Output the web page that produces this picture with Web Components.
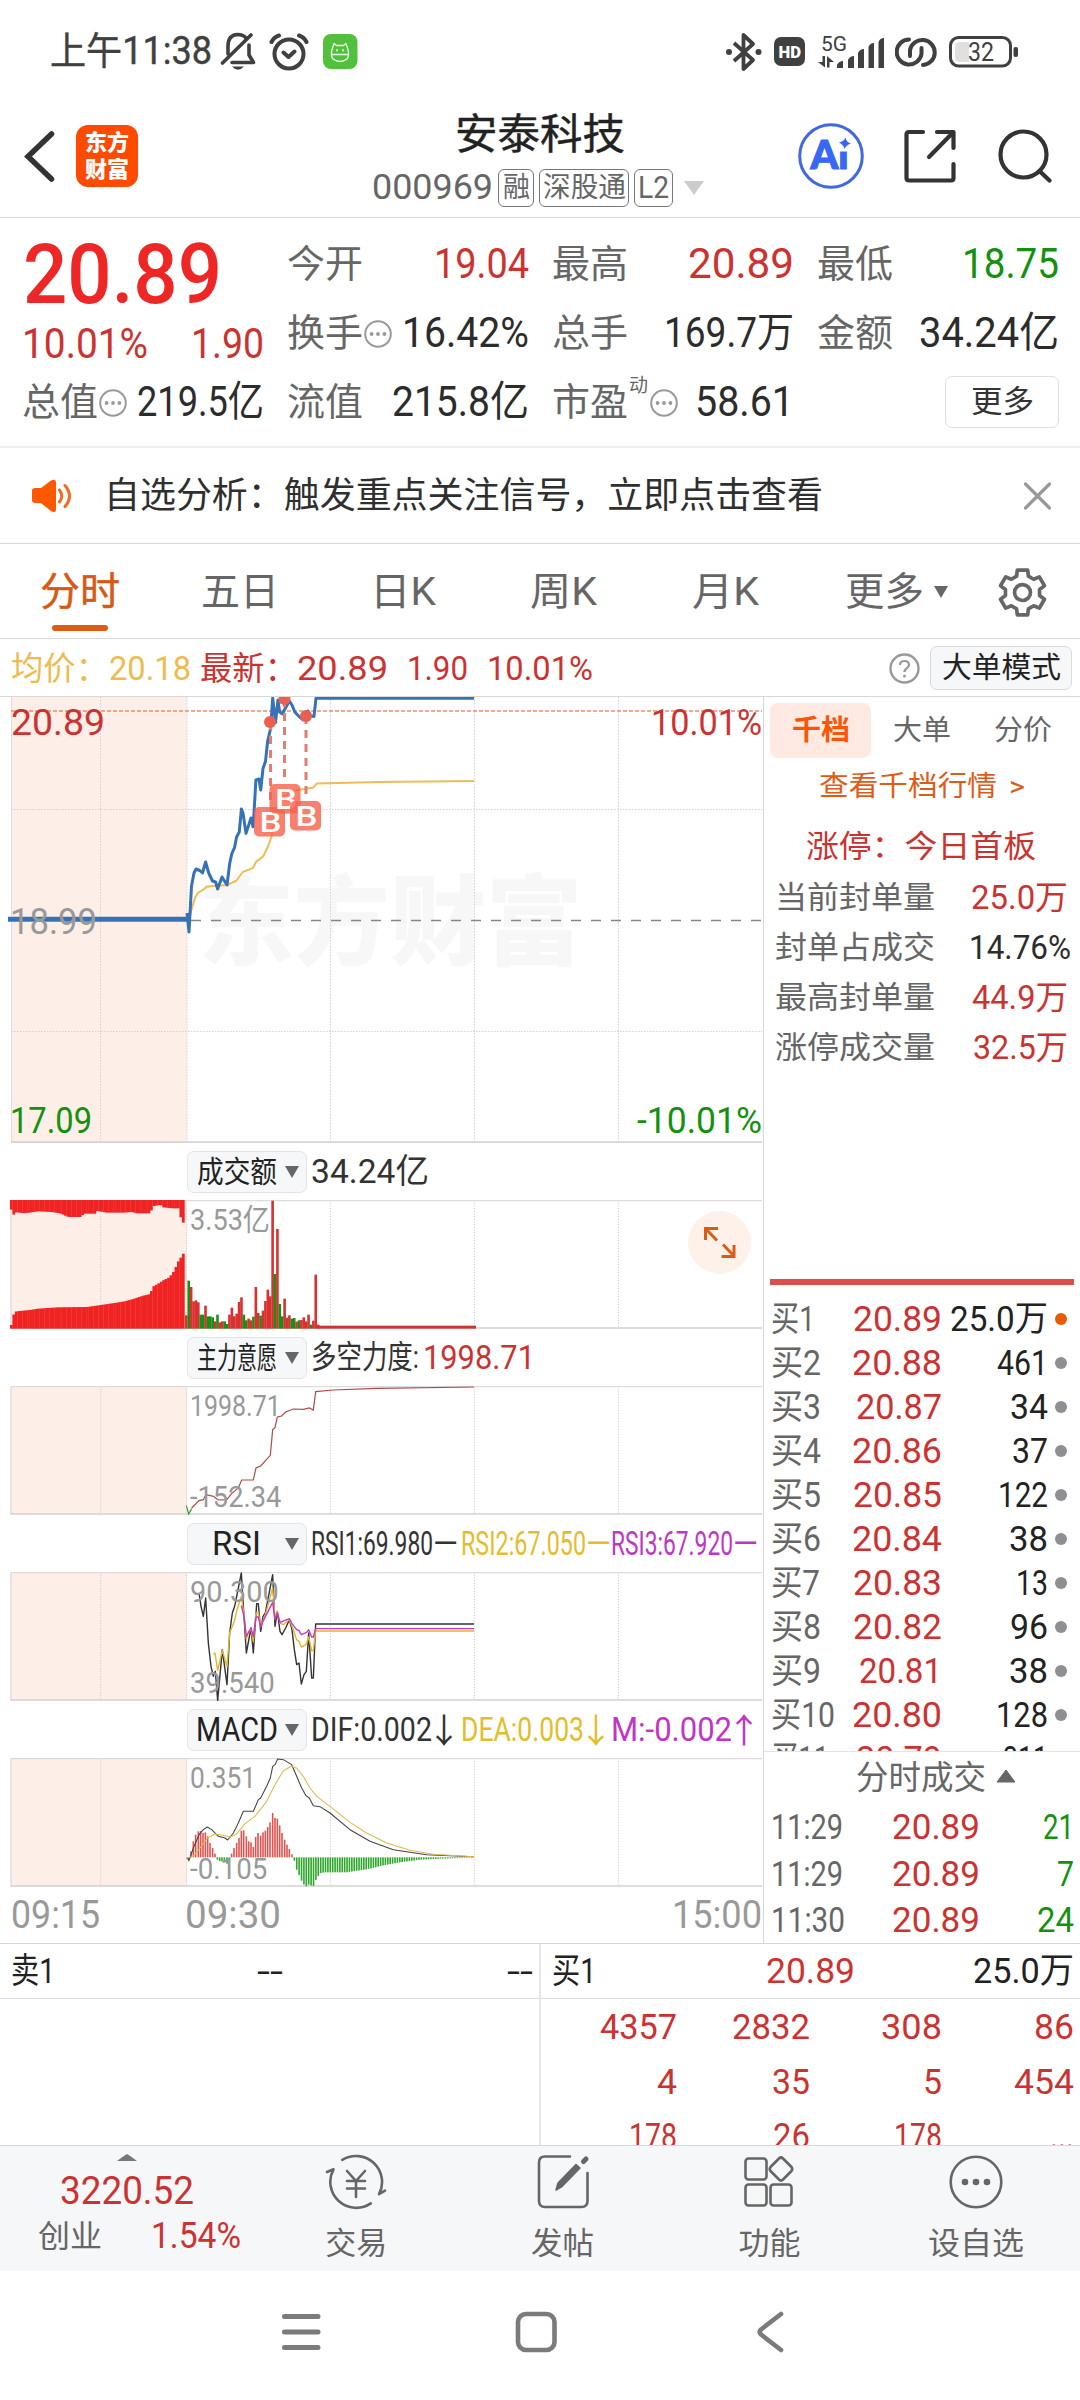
<!DOCTYPE html>
<html lang="zh-CN">
<head>
<meta charset="UTF-8">
<title>安泰科技 000969</title>
<style>
  html, body { margin: 0; padding: 0; background: #fff; }
  body {
    width: 1080px;
    height: 2400px;
    overflow: hidden;
    font-family: Roboto, "Noto Sans CJK SC", sans-serif;
    line-height: 1;
    color: #333;
    --red: #cb3331;
    --green: #15900f;
    --gray: #666;
    --line: #d8d8d8;
  }
  main { display: flex; height: 1246px; border-bottom: 1px solid #d5d6d8; }
</style>
</head>
<body>
  <status-bar></status-bar>
  <app-header></app-header>
  <quote-board></quote-board>
  <notice-bar>自选分析：触发重点关注信号，立即点击查看</notice-bar>
  <period-tabs></period-tabs>
  <price-strip></price-strip>
  <main>
    <chart-column></chart-column>
    <order-panel></order-panel>
  </main>
  <depth-split></depth-split>
  <bottom-bar></bottom-bar>
  <system-nav></system-nav>

<script>
// Shared base: renders the string returned by view() into an open shadow root
class BaseElement extends HTMLElement {
  constructor() {
    super();
    this._shadow = this.attachShadow({ mode: "open" });
  }

  connectedCallback() {
    this._shadow.innerHTML = this.view();
  }
}

// Text squeezed or stretched horizontally to the width in the "w" attribute
class FitText extends BaseElement {
  view() {
    return `
      <style>
        :host { display: inline-block; white-space: nowrap; flex: none; line-height: 1.2; }
        span { display: inline-block; transform-origin: 0 50%; }
      </style>
      <span><slot></slot></span>
    `;
  }

  connectedCallback() {
    super.connectedCallback();
    const w = Number(this.getAttribute("w"));
    const span = this._shadow.querySelector("span");
    const natural = span.getBoundingClientRect().width;
    if (!w || !natural) return;
    this.style.width = `${w}px`;
    span.style.transform = `scaleX(${w / natural})`;
  }
}
customElements.define("fit-text", FitText);

// Round "more info" hint next to a label
class InfoDot extends BaseElement {
  view() {
    return `
      <style>
        :host { display: inline-block; width: 28px; height: 30px; flex: none; }
        svg { display: block; }
      </style>
      <svg width="28" height="30" viewBox="0 0 28 30">
        <circle cx="14" cy="15" r="12.8" fill="none" stroke="#999" stroke-width="2"/>
        <g fill="#999"><circle cx="7.6" cy="15" r="1.9"/><circle cx="14" cy="15" r="1.9"/><circle cx="20.4" cy="15" r="1.9"/></g>
      </svg>
    `;
  }
}
customElements.define("info-dot", InfoDot);

class StatusBar extends BaseElement {
  view() {
    return `
      <style>
        :host { display: flex; height: 100px; box-sizing: border-box; padding: 0 61px 0 50px; align-items: center; justify-content: space-between; color: #404040; }
        div { display: flex; align-items: center; height: 40px; margin-top: 3px; }
        svg { display: block; flex: none; }
        .time { font-size: 38px; margin: 1px 8px 0 0; -webkit-text-stroke: .4px #404040; }
      </style>
      <div>
        <fit-text class="time" w="162">上午11:38</fit-text>
        <svg width="37" height="40" viewBox="0 0 37 40" fill="none" stroke="#404040" stroke-width="3.6" stroke-linecap="round" stroke-linejoin="round">
          <path d="M8 22V14Q8 3 17.5 2.5Q23 2.5 26 6M29 13V23L33.5 30.5H12"/>
          <path d="M2.5 31 31 3"/>
          <path d="M12 34.5Q18 41 24 34.5Z" fill="#404040" stroke="none"/>
        </svg>
        <svg style="margin-left:12px" width="40" height="40" viewBox="0 0 40 40" fill="none" stroke="#404040" stroke-width="4" stroke-linecap="round" stroke-linejoin="round">
          <circle cx="20" cy="22" r="14.5"/><path d="M2.5 10Q5 5 10 3.5M37.5 10Q35 5 30 3.5M14.5 20.5 19.5 25 25.5 19.5"/>
        </svg>
        <svg style="margin-left:14px" width="35" height="35" viewBox="0 0 35 35">
          <rect width="34.5" height="35" rx="8" fill="#52c03c"/>
          <g fill="none" stroke="#e9ffe5" stroke-width="1.3"><path d="M9.5 14 11 9.5 13.5 11.5H20.5L23 9.5 24.5 14Q27 21 24 25 17 30 10 25 7 21 9.5 14Z"/><path d="M8.5 20.5H25.5M14 15V17.5M20 15V17.5"/></g>
        </svg>
      </div>
      <div>
        <svg width="36" height="40" viewBox="0 0 36 40" fill="none" stroke="#404040" stroke-width="3.8" stroke-linejoin="round">
          <path d="M8 11 27 28 17.5 37V3L27 12 8 29"/><circle cx="3" cy="20" r="3" fill="#404040" stroke="none"/><circle cx="32.5" cy="20" r="3" fill="#404040" stroke="none"/>
        </svg>
        <svg style="margin-left:12px" width="31" height="30" viewBox="0 0 31 30">
          <rect width="31" height="29" rx="7" fill="#404040"/>
          <text x="4.5" y="20.5" font-size="17" font-weight="900" fill="#fff" textLength="22.5" lengthAdjust="spacingAndGlyphs">HD</text>
        </svg>
        <svg style="margin-left:12px" width="68" height="40" viewBox="0 0 68 40" fill="#404040">
          <text x="4" y="19" font-size="21" textLength="26" lengthAdjust="spacingAndGlyphs">5G</text>
          <path d="M5.5 24H8V35.5L1 30H5.5ZM10 24 17 30H12.5V35.5H10Z"/>
          <path d="M20 36V33Q22 29 26 29V36ZM31 36V28Q33 24 37 24V36ZM41 36V21Q43 17 47 17V36ZM51.5 36V15Q53 11 57 11V36ZM61.5 36V10Q63 6 67 6V36Z"/>
        </svg>
        <svg style="margin-left:10px" width="42" height="32" viewBox="0 0 42 32" fill="none" stroke="#404040" stroke-width="4" stroke-linecap="round">
          <path d="M14 3.5A12.5 12.5 0 1 0 26.5 18V12"/><path d="M28 29A12.5 12.5 0 1 0 15 14V20"/>
        </svg>
        <svg style="margin-left:12px" width="70" height="32" viewBox="0 0 70 32">
          <rect x="1.5" y="1.5" width="60" height="28.5" rx="8" fill="none" stroke="#404040" stroke-width="3"/>
          <path d="M11 6H20V26H11Q6 26 6 21V11Q6 6 11 6Z" fill="#e0e0e0"/>
          <rect x="64.5" y="11" width="4.5" height="10" rx="2" fill="#404040"/>
          <text x="19" y="24.5" font-size="25" fill="#404040" textLength="26" lengthAdjust="spacingAndGlyphs">32</text>
        </svg>
      </div>
    `;
  }
}
customElements.define("status-bar", StatusBar);

class AppHeader extends BaseElement {
  view() {
    return `
      <style>
        :host { display: grid; grid-template-columns: 360px 1fr 360px; height: 118px; box-sizing: border-box; border-bottom: 1px solid var(--line); }
        svg { display: block; flex: none; }
        .left, .right { display: flex; align-items: center; }
        .left { padding: 0 0 6px 24px; gap: 21px; }
        .logo { width: 62px; height: 62px; border-radius: 12px; background: #fe4a02; color: #fff; font-size: 22px; font-weight: 900; line-height: 27px; display: grid; place-content: center; text-align: center; }
        .mid { display: flex; flex-direction: column; align-items: center; padding-top: 10px; }
        .name { font-size: 42px; color: #222; height: 55px; line-height: 50px; -webkit-text-stroke: .4px #222; }
        .sub { display: flex; align-items: center; gap: 5px; color: var(--gray); font-size: 35px; margin: 2px 0 0 -4px; }
        .tag { border: 1.5px solid #777; border-radius: 6px; height: 36px; font-size: 28px; display: flex; align-items: center; justify-content: center; }
        .right { padding: 0 0 6px 78px; }
      </style>
      <div class="left">
        <svg width="31" height="52" viewBox="0 0 31 52" fill="none" stroke="#333" stroke-width="5.5" stroke-linecap="round"><path d="M27.5 4 4 26.5 27.5 49"/></svg>
        <div class="logo"><span>东方</span><span>财富</span></div>
      </div>
      <div class="mid">
        <fit-text class="name" w="170">安泰科技</fit-text>
        <div class="sub">
          <fit-text w="121">000969</fit-text>
          <div class="tag" style="width:34px"><fit-text w="27">融</fit-text></div>
          <div class="tag" style="width:88px"><fit-text w="83">深股通</fit-text></div>
          <div class="tag" style="width:37px;font-size:31px"><fit-text w="31">L2</fit-text></div>
          <svg style="margin-left:6px" width="20" height="14" viewBox="0 0 20 14"><path d="M0 0H20L10 14Z" fill="#ccc"/></svg>
        </div>
      </div>
      <div class="right">
        <svg width="66" height="68" viewBox="0 0 66 68">
          <circle cx="33" cy="34" r="31.3" fill="#fff" stroke="#4068e0" stroke-width="3"/>
          <text x="12.5" y="47" font-size="39" font-weight="900" font-family="Lato, Roboto" fill="#3866f5" stroke="#3866f5" stroke-width="1.2" textLength="38" lengthAdjust="spacingAndGlyphs">Ai</text>
          <rect x="40" y="14" width="14" height="15.5" fill="#fff"/>
          <path d="M47.5 15.5Q48.5 20.5 53 21.5 48.5 22.5 46.5 27 45.5 22.5 41 20.5 46 19.5 47.5 15.5Z" fill="#3866f5"/>
        </svg>
        <svg style="margin-left:40px" width="52" height="54" viewBox="0 0 52 54" fill="none" stroke="#333" stroke-width="4.2" stroke-linecap="round" stroke-linejoin="round">
          <path d="M19 3H5Q2.5 3 2.5 5.5V49Q2.5 51.5 5 51.5H47Q49.5 51.5 49.5 49V35"/><path d="M33 3H49.5V19M49 3.5 25 28"/>
        </svg>
        <svg style="margin-left:42px" width="54" height="55" viewBox="0 0 54 55" fill="none" stroke="#333" stroke-width="4.2" stroke-linecap="round">
          <circle cx="25.5" cy="26.5" r="23"/><path d="M41.5 43 51.5 52.500"/>
        </svg>
      </div>
    `;
  }
}
customElements.define("app-header", AppHeader);

// One label/value cell of the quote board
class QuoteItem extends BaseElement {
  view() {
    const sup = this.getAttribute("sup");
    return `
      <style>
        :host { display: flex; align-items: center; justify-content: space-between; height: 69px; font-size: 42px; color: var(--tone, #2c2c2c); }
        .label { display: flex; align-items: center; gap: 1px; color: var(--gray); font-size: 38px; }
        sup { font-size: 19px; line-height: 20px; align-self: flex-start; margin: -4px 1px 0 0; }
      </style>
      <div class="label"><fit-text w="76">${this.getAttribute("label")}</fit-text>${sup ? `<sup>${sup}</sup>` : ""}${this.hasAttribute("info") ? "<info-dot></info-dot>" : ""}</div>
      <fit-text w="${this.getAttribute("w")}">${this.textContent}</fit-text>
    `;
  }
}
customElements.define("quote-item", QuoteItem);

class QuoteBoard extends BaseElement {
  view() {
    return `
      <style>
        :host { display: grid; grid-template-columns: repeat(4, 242px); grid-template-rows: repeat(3, 69px); column-gap: 23px; height: 230px; box-sizing: border-box; padding: 12px 21px 10px 22px; border-bottom: 2px solid #eee; }
        .price { grid-row: span 2; color: var(--red); padding-top: 1px; }
        .big { font-size: 84px; font-weight: 500; color: #ee2625; line-height: 88px; display: block; margin-left: 1px; }
        .row { display: flex; justify-content: space-between; font-size: 42px; }
        .up { --tone: var(--red); }
        .down { --tone: var(--green); }
        .more { justify-self: end; align-self: center; width: 112px; height: 50px; border: 1px solid #dfe0e2; border-radius: 7px; font-size: 31px; display: flex; align-items: center; justify-content: center; margin-bottom: 2px; }
      </style>
      <div class="price">
        <fit-text class="big" w="199">20.89</fit-text>
        <div class="row"><fit-text w="126">10.01%</fit-text><fit-text w="73">1.90</fit-text></div>
      </div>
      <quote-item class="up" label="今开" w="95">19.04</quote-item>
      <quote-item class="up" label="最高" w="106">20.89</quote-item>
      <quote-item class="down" label="最低" w="97">18.75</quote-item>
      <quote-item label="换手" w="127" info>16.42%</quote-item>
      <quote-item label="总手" w="130">169.7万</quote-item>
      <quote-item label="金额" w="140">34.24亿</quote-item>
      <quote-item label="总值" w="127" info>219.5亿</quote-item>
      <quote-item label="流值" w="137">215.8亿</quote-item>
      <quote-item label="市盈" sup="动" w="99" info>58.61</quote-item>
      <div class="more"><fit-text w="63">更多</fit-text></div>
    `;
  }
}
customElements.define("quote-board", QuoteBoard);

class NoticeBar extends BaseElement {
  view() {
    return `
      <style>
        :host { display: flex; align-items: center; height: 96px; box-sizing: border-box; padding: 0 29px 0 31px; border-bottom: 1px solid var(--line); font-size: 36px; color: #2f2f2f; }
        .text { margin: 2px auto 0 32px; }
      </style>
      <svg width="41" height="34" viewBox="0 0 41 34">
        <path d="M4 9H10L20 1.5Q25-1 25 4V30Q25 35 20 32L10 24H4Q1 24 1 21V12Q1 9 4 9Z" fill="#fe5800"/>
        <path d="M28.5 11Q33 17 28.5 23M34 6.5Q43 17 34 27.5" fill="none" stroke="#f46a20" stroke-width="3" stroke-linecap="round"/>
      </svg>
      <fit-text class="text" w="719">${this.textContent}</fit-text>
      <svg width="27" height="28" viewBox="0 0 27 28" fill="none" stroke="#999" stroke-width="3.2" stroke-linecap="round"><path d="M1.5 2 25.5 26M25.5 2 1.5 26"/></svg>
    `;
  }
}
customElements.define("notice-bar", NoticeBar);

class PeriodTabs extends BaseElement {
  // six-tooth outline around (24, 24)
  gear() {
    const points = [];
    for (let i = 0; i < 6; i++) {
      [[-20, 17], [-13, 22.5], [13, 22.5], [20, 17]].forEach(([offset, r]) => {
        const a = ((i * 60 + offset - 90) * Math.PI) / 180;
        points.push(`${(24 + r * Math.cos(a)).toFixed(1)},${(24 + r * Math.sin(a)).toFixed(1)}`);
      });
    }
    return points.join(" ");
  }

  view() {
    return `
      <style>
        :host { display: grid; grid-template-columns: 160px 160px 166px 154px 171px 171px 80px; height: 95px; box-sizing: border-box; border-bottom: 1px solid var(--line); color: var(--gray); font-size: 39px; }
        div { display: flex; align-items: center; justify-content: center; gap: 10px; position: relative; padding-top: 2px; }
        .on { color: #d65a16; -webkit-text-stroke: .5px #d65a16; }
        .on::after { content: ""; position: absolute; left: 52px; bottom: 7px; width: 56px; height: 6px; border-radius: 3px; background: #dc5c12; }
      </style>
      <div class="on"><fit-text w="80">分时</fit-text></div>
      <div><fit-text w="78">五日</fit-text></div>
      <div><fit-text w="66">日K</fit-text></div>
      <div><fit-text w="67">周K</fit-text></div>
      <div><fit-text w="67">月K</fit-text></div>
      <div><fit-text w="79">更多</fit-text><svg width="14" height="12" viewBox="0 0 14 12"><path d="M0 0H14L7 12Z" fill="#666"/></svg></div>
      <div><svg width="49" height="49" viewBox="0 0 48 48" fill="none" stroke="#666" stroke-width="3.6" stroke-linejoin="round"><polygon points="${this.gear()}"/><circle cx="24" cy="24" r="7.8"/></svg></div>
    `;
  }
}
customElements.define("period-tabs", PeriodTabs);

class PriceStrip extends BaseElement {
  view() {
    return `
      <style>
        :host { display: flex; align-items: center; height: 58px; box-sizing: border-box; padding: 2px 8px 0 11px; border-bottom: 1px solid var(--line); font-size: 33px; color: var(--red); }
        .avg { color: #eebb50; }
        .help { margin: 0 0 1px auto; }
        .mode { width: 140px; height: 42px; margin: 0 0 1px 10px; border: 1px solid #d9dade; border-radius: 7px; background: #f6f7f9; color: #222; font-size: 29px; display: flex; align-items: center; justify-content: center; }
      </style>
      <fit-text class="avg" w="97">均价：</fit-text>
      <fit-text class="avg" w="82" style="margin-left:1px">20.18</fit-text>
      <fit-text w="97" style="margin-left:9px">最新：</fit-text>
      <fit-text w="91">20.89</fit-text>
      <fit-text w="61" style="margin-left:19px">1.90</fit-text>
      <fit-text w="106" style="margin-left:19px">10.01%</fit-text>
      <svg class="help" width="31" height="31" viewBox="0 0 31 31"><circle cx="15.5" cy="15.5" r="14" fill="none" stroke="#999" stroke-width="2.4"/><path d="M11 12Q11 8 15.5 8T20 12Q20 14 17.5 15.5 15.5 17 15.5 19" fill="none" stroke="#999" stroke-width="2.2"/><circle cx="15.5" cy="23" r="1.5" fill="#999"/></svg>
      <div class="mode"><fit-text w="119">大单模式</fit-text></div>
    `;
  }
}
customElements.define("price-strip", PriceStrip);

// Intraday price chart. Coordinates are page pixels, the viewBox shifts them up.
class PriceChart extends BaseElement {
  view() {
    const price = "187,913 189,932 191.5,886 194,873 196,869 199.7,870.5 202.5,873 205.6,862 208.7,873 212.5,881 215.6,882 217.6,889 222,877 227,885 229.7,863.5 231.7,854 234.5,847.6 236.6,837 239.3,832 241.4,809 243,813 246,833.4 251,818 253,826.7 254,813 255.9,780 259,779 260.7,790 263,768.5 265.5,761.4 267.6,741.7 270.7,728 272.7,698 275.5,722.7 278,700 279.6,712 282.4,714 284.4,710 289.3,701 292,705 294.8,712 299.6,717 303,720 308,711 310.6,716 314,716.4 316,698.2 474,698.2";
    const avg = "189,920 191.5,909.7 195,898 198,892.7 203,890 206.6,886.8 213.5,886 227,885 236,881 242.8,872 253,868 256,862 263.4,856 268,846.5 271.3,837 275.5,813 283,797 292.7,791 304.8,789 313.4,787.5 316.8,783.6 378.8,782 474,781";
    const marker = (x, y) => `<rect x="${x}" y="${y}" width="31" height="29.5" rx="5" fill="#f8634f" fill-opacity=".82"/><text x="${x + 5.5}" y="${y + 24.5}" font-size="28" font-weight="500" fill="#fff" textLength="22" lengthAdjust="spacingAndGlyphs">B</text>`;
    return `
      <style>
        :host { display: block; width: 763px; height: 446px; }
        svg { display: block; font-size: 37.5px; }
      </style>
      <svg width="763" height="446" viewBox="0 697 763 446">
        <rect x="11" y="697" width="176" height="446" fill="#fdeee7"/>
        <text x="198" y="957" font-size="98" font-weight="900" fill="#f7f7f7" textLength="384" lengthAdjust="spacingAndGlyphs">东方财富</text>
        <g stroke="#d2d2d2" stroke-dasharray="1.5 1.5">
          <path d="M100.5 697V1142M187 697V1142M330.5 697V1142M474.5 697V1142M618.5 697V1142M11 809.5H762M11 1031.5H762"/>
        </g>
        <path d="M11.5 697V1142" stroke="#ddd"/>
        <path d="M11 1142.2H762" stroke="#d5d5d5" stroke-width="2"/>
        <path d="M11 711H762" stroke="#e2936a" stroke-width="1.4" stroke-dasharray="4 2"/>
        <path d="M191 920.5H762" stroke="#868686" stroke-width="1.6" stroke-dasharray="10 10"/>
        <polyline points="${avg}" fill="none" stroke="#eebd55" stroke-width="2"/>
        <path d="M8 919.3H188" stroke="#3672b8" stroke-width="5"/>
        <polyline points="${price}" fill="none" stroke="#3672b8" stroke-width="3" stroke-linejoin="round"/>
        <path d="M270.5 722V802M284.5 699V779M306 716V796" stroke="#e37d70" stroke-width="3" stroke-dasharray="8 6"/>
        <g fill="#ec5f50"><circle cx="270" cy="722" r="6"/><circle cx="284.5" cy="699" r="6"/><circle cx="306" cy="716" r="6"/></g>
        ${marker(254, 807)}${marker(269.5, 784)}${marker(290, 801)}
        <g fill="#cb3331">
          <text x="11" y="735" textLength="94" lengthAdjust="spacingAndGlyphs">20.89</text>
          <text x="651" y="735" textLength="111" lengthAdjust="spacingAndGlyphs">10.01%</text>
        </g>
        <text x="10" y="934" fill="#999" textLength="87" lengthAdjust="spacingAndGlyphs">18.99</text>
        <g fill="#15900f">
          <text x="10" y="1133" textLength="82" lengthAdjust="spacingAndGlyphs">17.09</text>
          <text x="637" y="1133" textLength="125" lengthAdjust="spacingAndGlyphs">-10.01%</text>
        </g>
      </svg>
    `;
  }
}
customElements.define("price-chart", PriceChart);

// Indicator strip: selector, legend (slot) and a plot drawn at 3 units per pixel
class IndicatorChart extends BaseElement {
  view() {
    const kind = this.getAttribute("kind");
    const high = this.getAttribute("high").split("|");
    const low = (this.getAttribute("low") || "").split("|");
    return `
      <style>
        :host { display: block; width: 763px; height: 186px; }
        header { display: flex; align-items: center; height: 57px; padding-left: 187px; font-size: 34px; }
        .pick { display: flex; align-items: center; justify-content: space-between; width: 118px; height: 40px; flex: none; border: 1px solid #e3e4e7; border-radius: 7px; background: #f6f7f9; color: #222; font-size: ${this.getAttribute("size") || 34}px; margin-right: 4px; }
        .pick span { flex: 1; text-align: center; }
        .pick svg { margin-right: 7px; flex: none; }
        svg { display: block; }
        .plot text { font-size: 88px; fill: #999; }
      </style>
      <header>
        <div class="pick">
          <span><fit-text w="${this.getAttribute("pick-w")}">${this.getAttribute("pick")}</fit-text></span>
          <svg width="14" height="12" viewBox="0 0 14 12"><path d="M0 0H14L7 12Z" fill="#666"/></svg>
        </div>
        <slot></slot>
      </header>
      <svg class="plot" width="763" height="129" viewBox="0 0 2289 387">
        <rect x="33" y="0" width="528" height="385" fill="#fdeee7"/>
        <path d="M302 0V385M560 0V385M991 0V385M1423 0V385M1855 0V385" stroke="#d2d2d2" stroke-width="3" stroke-dasharray="4 4"/>
        <path d="M33 0V385M31 2H2286" stroke="#dcdcdc" stroke-width="4" fill="none"/>
        <path d="M31 384H2286" stroke="#d2d2d2" stroke-width="5"/>
        ${kind === "volume" ? "" : this[kind]()}
        <text x="570" y="90" textLength="${high[1]}" lengthAdjust="spacingAndGlyphs">${high[0]}</text>
        ${low[1] ? `<text x="570" y="363" textLength="${low[1]}" lengthAdjust="spacingAndGlyphs">${low[0]}</text>` : ""}
        ${kind === "volume" ? this.volume() : ""}
      </svg>
    `;
  }

  bars(list, base, width) {
    return list.map(([x, y, c]) => `<rect x="${x - width / 2}" y="${Math.min(y, base)}" width="${width}" height="${Math.abs(base - y)}" fill="${c}"/>`).join("");
  }

  // expands [x, y] anchor points into steps of one bar each
  steps(anchors, pitch) {
    const out = [];
    for (let x = anchors[0][0]; x <= anchors[anchors.length - 1][0]; x += pitch) {
      const i = Math.max(1, anchors.findIndex((a) => a[0] >= x));
      const [x0, y0] = anchors[i - 1];
      const [x1, y1] = anchors[i];
      out.push([x, y0 + ((y1 - y0) * (x - x0)) / (x1 - x0)]);
    }
    return out;
  }

  // negative entries are falling minutes
  volume() {
    const r = "#d8312f", g = "#189014";
    const top = [[34, 29], [41, 44], [49, 37], [75, 40], [115, 34], [155, 36], [180, 40], [205, 51], [245, 51], [250, 41], [285, 41], [288, 32], [320, 38], [370, 38], [395, 36], [410, 40], [452, 40], [457, 19], [475, 16], [481, 12], [488, 22], [520, 25], [537, 25], [543, 54], [550, 68]];
    const bottom = [[34, 375], [41, 344], [49, 334], [90, 330], [115, 326], [175, 322], [260, 321], [290, 317], [330, 311], [370, 305], [400, 297], [430, 287], [452, 282], [457, 261], [475, 251], [490, 241], [505, 234], [515, 224], [525, 209], [532, 189], [540, 177], [550, 161]];
    const tops = [346, -242, 261, 304, 301, 307, -344, -344, 317, -349, -349, -352, 364, -344, 367, 364, -364, -372, 344, 323, 349, 341, 306, 292, -344, -361, 356, 361, -350, 261, 339, -347, 332, 303, 269, 289, 2, -222, 87, -312, -349, 296, 353, 346, -356, -354, 365, -361, 360, 352, 364, 344, -374, 362, 224, 374];
    const pre = [...this.steps(top, 7.37).map(([x, y]) => [x, y, 0]), ...this.steps(bottom, 7.37).map(([x, y]) => [x, y, 386])];
    return `
      ${pre.map(([x, y, b]) => this.bars([[x, y, "#f02323"]], b, 8.4)).join("")}
      ${this.bars(tops.map((t, i) => [559 + i * 7.19, Math.abs(t), t < 0 ? g : r]), 386, 7.8)}
      <rect x="955" y="377" width="473" height="9" fill="#cb3534"/>
    `;
  }

  force() {
    return `
      <g fill="none" stroke-width="3.6">
        <path d="M559 359 566 384 575 368" stroke="#2f9e2c"/>
        <path d="M575 366 597 344 610 341 618 326 640 331 655 342 680 341 695 323 715 306 725 282H760L768 246 782 240 811 208 818 131 825 125 832 93 845 90 857 78 880 69 910 70 928 66 940 72 947 17 1000 12 1130 7 1422 3" stroke="#b04a48"/>
      </g>
    `;
  }

  rsi() {
    return `
      <g transform="translate(0 -217)" fill="none" stroke-width="4.2" stroke-linejoin="round">
        <polyline stroke="#333" points="597,280 603,320 610,350 617,295 625,430 633,500 640,530 646,515 653,602 667,450 681,555 689,400 697,340 704,320 724,220 732,350 739,460 753,385 760,460 770,312 775,312 782,395 789,350 796,340 818,225 825,380 832,335 840,395 846,405 857,385 868,360 876,390 883,450 890,495 897,490 904,553 912,525 919,515 926,400 935,535 940,535 947,373 1422,373"/>
        <polyline stroke="#e3b52f" points="640,463 645,460 653,512 667,452 681,500 689,400 703,365 711,330 724,290 732,345 739,418 746,395 753,390 760,425 768,340 775,338 782,380 796,345 818,265 825,355 832,335 840,370 850,375 868,360 876,380 883,400 890,420 897,425 904,442 918,435 926,412 935,453 940,453 947,394 1422,394"/>
        <polyline stroke="#c43ac0" points="724,318 732,350 739,410 753,385 760,410 768,352 775,352 782,382 789,365 818,308 825,360 832,340 840,368 868,357 876,372 890,390 897,393 904,405 920,398 926,390 935,412 940,412 947,387 1422,387"/>
      </g>
    `;
  }

  macd() {
    const r = "#df5450", g = "#2da62b";
    const head = [566, 1085, 573, 1055, 580, 1025, 587, 1005, 595, 995, 602, 994, 609, 1000, 616, 998, 623, 1010, 630, 1030, 638, 1045, 645, 1062, 652, 1080, 659, 1084, 666, 1085, 673, 1085, 681, 1092, 688, 1080, 695, 1062, 702, 1045, 710, 1030, 717, 1015, 724, 993, 731, 992, 739, 1010, 746, 1025, 753, 1028, 760, 1042, 767, 1012, 774, 1000, 782, 1008, 789, 998, 796, 993, 803, 982, 810, 968, 818, 940, 825, 955, 832, 957, 839, 977, 846, 1000, 854, 1020, 861, 1035, 868, 1048, 876, 1064];
    const list = [];
    for (let i = 0; i < head.length; i += 2) list.push([head[i], head[i + 1]]);
    const tail = this.steps([[883, 1083], [890, 1110], [897, 1125], [904, 1142], [912, 1155], [919, 1160], [926, 1155], [940, 1160], [947, 1142], [954, 1130], [962, 1120], [976, 1118], [1040, 1118], [1080, 1112], [1110, 1107], [1150, 1097], [1200, 1088], [1260, 1080], [1320, 1077], [1422, 1074]], 7.19);
    return `
      <g transform="translate(0 -775)">
        ${this.bars([...list, ...tail].map(([x, y]) => [x, y, y < 1073 ? r : g]), 1073, 4.8)}
        <g fill="none" stroke-width="3.2" stroke-linejoin="round">
          <polyline stroke="#444" points="560,1075 568,1080 580,1045 597,1005 610,990 622,982 635,990 655,1010 675,1015 683,1021 700,1000 715,970 730,935 760,935 775,900 782,895 800,860 811,835 818,800 825,795 833,778 850,780 875,795 890,830 905,865 918,888 928,895 940,918 960,921 990,940 1050,990 1110,1025 1180,1050 1280,1065 1422,1071"/>
          <polyline stroke="#dfba4a" points="560,1075 580,1070 600,1045 622,1015 645,1003 670,1007 690,1012 710,1003 735,972 765,950 800,905 825,855 850,813 873,800 890,805 910,830 930,865 950,890 990,920 1050,968 1100,1000 1160,1030 1230,1052 1300,1064 1422,1071"/>
        </g>
      </g>
    `;
  }
}
customElements.define("indicator-chart", IndicatorChart);

class ChartColumn extends BaseElement {
  view() {
    return `
      <style>
        :host { display: block; width: 763px; height: 1246px; position: relative; flex: none; border-right: 1px solid var(--line); }
        .y { color: #e4bd2c; }
        .m { color: #c135c4; }
        .red { color: var(--red); }
        .leg { display: flex; align-items: center; width: 150px; white-space: nowrap; }
        .leg i { font-style: normal; font-family: "Noto Sans CJK SC"; width: 16px; display: flex; justify-content: center; margin-left: 4px; }
        .axis { display: flex; height: 56px; align-items: center; font-size: 38px; color: #999; padding: 2px 1px 0 11px; box-sizing: border-box; }
        .axis :last-child { margin-left: auto; }
        .zoom { position: absolute; left: 688px; top: 514px; }
      </style>
      <price-chart></price-chart>
      <indicator-chart kind="volume" pick="成交额" pick-w="80" size="30" high="3.53亿|240"><fit-text w="118">34.24亿</fit-text></indicator-chart>
      <indicator-chart kind="force" pick="主力意愿" pick-w="80" size="30" high="1998.71|272" low="-152.34|274"><fit-text w="108" style="margin-right:4px;font-size:32px">多空力度:</fit-text><fit-text class="red" w="112">1998.71</fit-text></indicator-chart>
      <indicator-chart kind="rsi" pick="RSI" pick-w="49" high="90.300|266" low="39.540|254"><div class="leg"><fit-text w="122">RSI1:69.980</fit-text><fit-text w="25">—</fit-text></div><div class="leg y"><fit-text w="125">RSI2:67.050</fit-text><fit-text w="25">—</fit-text></div><div class="leg m"><fit-text w="122">RSI3:67.920</fit-text><fit-text w="25">—</fit-text></div></indicator-chart>
      <indicator-chart kind="macd" pick="MACD" pick-w="82" high="0.351|198" low="-0.105|232"><div class="leg"><fit-text w="121">DIF:0.002</fit-text><i>↓</i></div><div class="leg y"><fit-text w="123">DEA:0.003</fit-text><i>↓</i></div><div class="leg m"><fit-text w="121">M:-0.002</fit-text><i>↑</i></div></indicator-chart>
      <div class="axis"><fit-text w="89">09:15</fit-text><fit-text w="96" style="margin-left:85px">09:30</fit-text><fit-text w="90">15:00</fit-text></div>
      <svg class="zoom" width="63" height="63" viewBox="0 0 63 63">
        <circle cx="31.5" cy="31.5" r="31.5" fill="#fef1ea"/>
        <path d="M17.5 29V17.5H30M18 18 29 29.5M46 34V45.5H33.5M46 45 35 33.5" fill="none" stroke="#db5c17" stroke-width="3"/>
      </svg>
    `;
  }
}
customElements.define("chart-column", ChartColumn);

class OrderPanel extends BaseElement {
  view() {
    const stats = [["当前封单量", "25.0万", 97, "up"], ["封单占成交", "14.76%", 102, ""], ["最高封单量", "44.9万", 96, "up"], ["涨停成交量", "32.5万", 95, "up"]];
    const bids = [["1", 44, "20.89", 89, "25.0万", 98], ["2", 50, "20.88", 90, "461", 51], ["3", 50, "20.87", 86, "34", 38], ["4", 50, "20.86", 90, "37", 36], ["5", 50, "20.85", 89, "122", 50], ["6", 50, "20.84", 90, "38", 39], ["7", 49, "20.83", 89, "13", 32], ["8", 50, "20.82", 89, "96", 38], ["9", 50, "20.81", 83, "38", 39], ["10", 64, "20.80", 90, "128", 52], ["11", 58, "20.79", 86, "311", 45]];
    const deals = [["11:29", 72, "21", 31], ["11:29", 72, "7", 17], ["11:30", 74, "24", 37]];
    return `
      <style>
        :host { display: block; width: 316px; height: 1246px; box-sizing: border-box; }
        .tabs { display: grid; grid-template-columns: 101px 101px 101px; height: 55px; margin: 6px 6px 0; font-size: 28px; color: var(--gray); }
        .tabs div { display: flex; align-items: center; justify-content: center; padding-top: 1px; box-sizing: border-box; }
        .tabs .on { background: #feeae2; border-radius: 8px; color: #f95706; font-weight: 700; }
        .link, .limit { display: flex; justify-content: center; align-items: center; box-sizing: border-box; }
        .link { height: 58px; color: #dd5d18; font-size: 28px; gap: 12px; }
        .limit { height: 57px; padding: 5px 2px 0 0; color: var(--red); font-size: 31px; }
        .stat { display: flex; align-items: center; justify-content: space-between; height: 50px; padding: 0 12px 0 11px; font-size: 31px; color: #2c2c2c; }
        .stat :first-child { color: var(--gray); }
        .up, .p { color: var(--red); }
        .rule { height: 6px; background: #dc4d4b; margin: 206px 6px 13px; }
        .bids { height: 453px; overflow: hidden; border-bottom: 1px solid #e4e4e4; }
        .bid { display: grid; grid-template-columns: 64px 107px 106px 1fr; align-items: center; height: 44px; padding-left: 7px; font-size: 35px; color: #222; }
        .bid > * { justify-self: end; }
        .bid > :first-child { justify-self: start; color: var(--gray); }
        .bid b { width: 12px; height: 12px; border-radius: 50%; background: #8e8e93; justify-self: start; margin: 0 0 3px 7px; }
        .bid.first b { background: #e85a00; }
        .bid:last-child b { visibility: hidden; }
        .title { display: flex; align-items: center; justify-content: center; height: 52px; gap: 10px; font-size: 33px; color: var(--gray); padding-left: 28px; }
        .title svg { margin-bottom: 5px; }
        .deal { display: grid; grid-template-columns: 1fr 90px 94px; height: 46.5px; align-items: center; padding: 0 6px 0 7px; font-size: 35px; color: var(--gray); position: relative; top: 1px; }
        .deal > :nth-child(n+2) { justify-self: end; }
        .deal .g { color: var(--green); }
      </style>
      <div class="tabs"><div class="on"><fit-text w="58">千档</fit-text></div><div><fit-text w="58">大单</fit-text></div><div><fit-text w="58">分价</fit-text></div></div>
      <div class="link"><fit-text w="178">查看千档行情</fit-text><fit-text w="16">&gt;</fit-text></div>
      <div class="limit"><fit-text w="230">涨停：今日首板</fit-text></div>
      ${stats.map(([k, v, w, c]) => `<div class="stat"><fit-text w="160">${k}</fit-text><fit-text class="${c}" w="${w}" style="font-size:33px${c ? "" : ";margin-right:-3px"}">${v}</fit-text></div>`).join("")}
      <div class="rule"></div>
      <div class="bids">
        ${bids.map(([n, w, p, pw, v, vw], i) => `<div class="bid ${i ? "" : "first"}"><fit-text w="${w}">买${n}</fit-text><fit-text class="p" w="${pw}">${p}</fit-text><fit-text w="${vw}">${v}</fit-text><b></b></div>`).join("")}
      </div>
      <div class="title"><fit-text w="130">分时成交</fit-text><svg width="20" height="14" viewBox="0 0 20 14"><path d="M10 1 19 13H1Z" fill="#666" stroke="#666" stroke-linejoin="round"/></svg></div>
      ${deals.map(([t, tw, v, vw]) => `<div class="deal"><fit-text w="${tw}">${t}</fit-text><fit-text class="p" w="88">20.89</fit-text><fit-text class="g" w="${vw}">${v}</fit-text></div>`).join("")}
    `;
  }
}
customElements.define("order-panel", OrderPanel);

class DepthSplit extends BaseElement {
  view() {
    const queue = [["4357", 77], ["2832", 78], ["308", 61], ["86", 40], ["4", 20], ["35", 38], ["5", 19], ["454", 60], ["178", 48], ["26", 37], ["178", 48], ["...", 24]];
    return `
      <style>
        :host { display: grid; grid-template-columns: 539px 1fr; height: 202px; box-sizing: border-box; overflow: hidden; border-bottom: 1px solid var(--line); color: #222; font-size: 35px; }
        .buy { border-left: 2px solid #e6e6e6; }
        .head { display: grid; grid-template-columns: 1fr 1fr 1fr; align-items: center; height: 55px; padding: 2px 6px 0 11px; box-sizing: border-box; border-bottom: 1px solid #ddd; }
        .head > :nth-child(2) { justify-self: center; margin-right: 5px; }
        .head > :nth-child(3) { justify-self: end; }
        .queue { display: grid; grid-template-columns: repeat(4, 132.3px); grid-auto-rows: 54.5px; align-items: center; justify-items: end; width: 533px; color: var(--red); padding: 2px 0 0 4px; box-sizing: border-box; }
        .red { color: var(--red); }
      </style>
      <div class="sell">
        <div class="head"><fit-text w="44">卖1</fit-text><fit-text w="26">--</fit-text><fit-text w="26">--</fit-text></div>
      </div>
      <div class="buy">
        <div class="head"><fit-text w="44">买1</fit-text><fit-text class="red" w="89">20.89</fit-text><fit-text w="101">25.0万</fit-text></div>
        <div class="queue">${queue.map(([n, w]) => `<fit-text w="${w}">${n}</fit-text>`).join("")}</div>
      </div>
    `;
  }
}
customElements.define("depth-split", DepthSplit);

class BottomBar extends BaseElement {
  view() {
    const item = (label, w, icon) => `<div class="item"><svg width="62" height="56" viewBox="0 0 62 56" fill="none" stroke="#666" stroke-width="2.6" stroke-linecap="round" stroke-linejoin="round">${icon}</svg><fit-text w="${w}">${label}</fit-text></div>`;
    return `
      <style>
        :host { display: grid; grid-template-columns: 253px repeat(4, 206.6px); height: 125px; background: #f6f7f9; color: var(--gray); font-size: 31px; }
        svg { display: block; }
        .index { display: flex; flex-direction: column; align-items: center; padding-top: 8px; }
        .value { color: var(--red); font-size: 39px; height: 47px; line-height: 47px; margin-top: 7px; }
        .row { display: flex; justify-content: space-between; align-items: center; width: 203px; height: 43px; margin-left: 26px; }
        .row :last-child { color: var(--red); font-size: 36px; }
        .item { display: flex; flex-direction: column; align-items: center; padding-top: 8px; gap: 15px; }
      </style>
      <div class="index">
        <svg width="20" height="7" viewBox="0 0 20 7"><path d="M0 7Q5 3 10 0Q15 3 20 7Z" fill="#777"/></svg>
        <fit-text class="value" w="134">3220.52</fit-text>
        <div class="row"><fit-text w="64">创业</fit-text><fit-text w="90">1.54%</fit-text></div>
      </div>
      ${item("交易", 62, `<path d="M17.3 5.900A26 26 0 0 1 54 40.2L60 36.7M45.8 49.4A26 26 0 0 1 8.500 15.300L2 18"/><path d="M22 17 31 27 40 17M22 27H40M22 34.5H40M31 27V43"/>`)}
      ${item("发帖", 63, `<path d="M38 2.5H13Q7 2.5 7 8.5V47Q7 53 13 53H49.5Q55.5 53 55.5 47V19"/><path d="M24 36 26 29 44 10.5 48 14 30 32.5Z" fill="#666" stroke-width="1.5"/><path d="M51.5 7.5 54 5" stroke-width="5"/>`)}
      ${item("功能", 62, `<rect x="7.5" y="4.5" width="21" height="21" rx="3"/><rect x="7.5" y="30.5" width="21" height="21" rx="3"/><rect x="32.5" y="30.5" width="21" height="21" rx="3"/><path d="M41 4.5Q43 2.5 45 4.5L53.5 13Q55 15 53.5 17L45 25.5Q43 27.5 41 25.5L32.5 17Q31 15 32.5 13Z"/>`)}
      ${item("设自选", 96, `<circle cx="31" cy="28" r="25.3"/><g fill="#666" stroke="none"><circle cx="20" cy="28" r="3.3"/><circle cx="31" cy="28" r="3.3"/><circle cx="42" cy="28" r="3.3"/></g>`)}
    `;
  }
}
customElements.define("bottom-bar", BottomBar);

class SystemNav extends BaseElement {
  view() {
    return `
      <style>
        :host { display: flex; align-items: center; height: 129px; box-sizing: border-box; padding: 0 296px 7px 281px; justify-content: space-between; }
        svg:nth-of-type(2) { margin-right: 6px; }
      </style>
      <svg width="40" height="40" viewBox="0 0 40 40" stroke="#7b7b7b" stroke-width="5" stroke-linecap="round"><path d="M3.5 4.5H37M3.5 20H37M3.5 35.5H37"/></svg>
      <svg width="42" height="42" viewBox="0 0 42 42" fill="none" stroke="#7b7b7b" stroke-width="4.6"><rect x="3" y="3" width="36.5" height="36" rx="8"/></svg>
      <svg width="27" height="42" viewBox="0 0 27 42" fill="none" stroke="#7b7b7b" stroke-width="4.6" stroke-linecap="round" stroke-linejoin="round"><path d="M24 3 4 18.5Q1.5 21 4 23.5L24 39"/></svg>
    `;
  }
}
customElements.define("system-nav", SystemNav);
</script>
</body>
</html>
